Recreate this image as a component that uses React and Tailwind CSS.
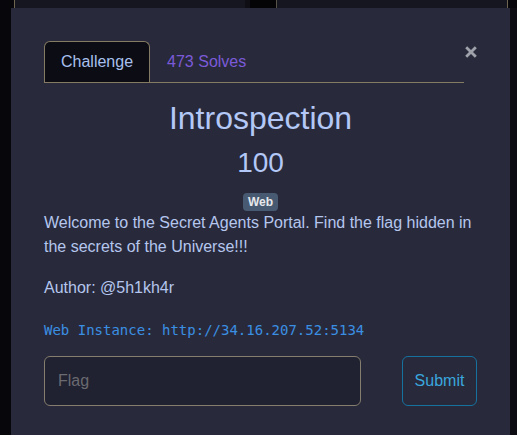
export default function App() {
  return (
    <div className="w-[517px] h-[435px] overflow-hidden bg-[#07070b] font-['Liberation_Sans',Arial,sans-serif]">
      <div className="flex h-[8px]">
        <div className="w-[14px] bg-[#07070b]" />
        <div className="w-[231px] bg-[#161620] border-l border-[#6e6650]" />
        <div className="w-[5px] bg-[#0e0e14]" />
        <div className="w-[26px] bg-[#040407]" />
        <div className="w-[232px] bg-[#161620] border-l border-[#57524a] border-r border-r-[#6e6650]" />
        <div className="flex-1 bg-[#07070b]" />
      </div>
      <div className="flex">
        <div className="w-[11px] bg-[#07070b]" />
        <div className="w-[499px] bg-[#282a3b] px-[33px] pt-[33px] pb-[60px]">
          <div className="flex items-start">
            <div className="w-[420px] flex border-b border-[#857a62]">
              <div className="h-[41px] px-[16px] flex items-center bg-[#0b0c14] border border-b-0 border-[#857a62] rounded-t-[6px] text-[16px] text-[#a9c0ee]">
                Challenge
              </div>
              <div className="h-[41px] px-[17px] flex items-center text-[16px] text-[#7b5ad8]">
                473 Solves
              </div>
            </div>
            <div className="ml-[1px] mt-[5px]">
              <svg width="12" height="12" viewBox="0 0 12 12">
                <path d="M1.2 1.2 L10.8 10.8 M10.8 1.2 L1.2 10.8" stroke="#9fa1ab" strokeWidth="2.8" strokeLinecap="butt" />
              </svg>
            </div>
          </div>
          <div className="mt-[16px] text-center text-[32px] leading-[1.2] text-[#b3c8f6]">Introspection</div>
          <div className="mt-[9px] text-center text-[28px] leading-[1.2] text-[#b3c8f6]">100</div>
          <div className="mt-[13px] flex justify-center">
            <span className="h-[18px] flex items-center rounded-[4px] bg-[#485a72] px-[4.5px] text-[12px] leading-none font-bold text-[#e6e8ec]">Web</span>
          </div>
          <div className="mt-0 text-[16px] leading-6 text-[#b5c6ee]">
            <p className="mb-[17px]">Welcome to the Secret Agents Portal. Find the flag hidden in the secrets of the Universe!!!</p>
            <p className="mb-[18px]">Author: @5h1kh4r</p>
            <p className="font-['DejaVu_Sans_Mono',monospace] text-[14px] leading-6 text-[#3b8fe3]">Web Instance: http://34.16.207.52:5134</p>
          </div>
          <div className="mt-[14px] flex">
            <div className="w-[317px] h-[50px] rounded-[6px] border border-[#857d6e] bg-[#202131] flex items-center px-[13px] text-[16px] text-[#6a6a70]">
              Flag
            </div>
            <div className="flex-1" />
            <div className="w-[75px] h-[50px] rounded-[6px] border border-[#16719f] flex items-center justify-center text-[16px] text-[#3aa6de]">
              Submit
            </div>
          </div>
        </div>
        <div className="flex-1 bg-[#0c0c12]" />
      </div>
    </div>
  );
}
